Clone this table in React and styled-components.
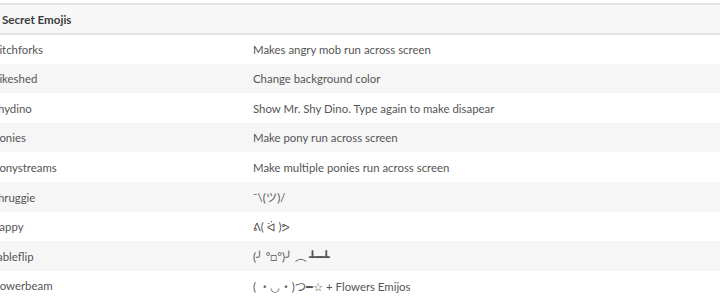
import styled, { createGlobalStyle } from "styled-components";

const GlobalStyle = createGlobalStyle`
  html, body {
    margin: 0;
    padding: 0;
    background: #fff;
    overflow: hidden;
  }
  body {
    font-family: Lato, "Open Sans", "DejaVu Sans", "Noto Sans CJK JP", sans-serif;
  }
`;

const emojis = [
  ["pitchforks", "Makes angry mob run across screen"],
  ["bikeshed", "Change background color"],
  ["shydino", "Show Mr. Shy Dino. Type again to make disapear"],
  ["ponies", "Make pony run across screen"],
  ["ponystreams", "Make multiple ponies run across screen"],
  ["shruggie", "¯\\(ツ)/"],
  ["happy", "ᕕ( ᐛ )ᕗ"],
  ["tableflip", "(╯ °□°)╯ ︵ ┻━┻"],
  ["flowerbeam", "( ・◡・)つ━☆ + Flowers Emijos"],
];

// rows are ~29.6px apart in the shot, so spread the rounding
const ROW = 29.6;
const rowHeight = (i) => Math.round((i + 1) * ROW) - Math.round(i * ROW);

function App() {
  return (
    <>
      <GlobalStyle />
      <Page>
        <Table>
          <colgroup>
            <col style={{ width: "260px" }} />
            <col />
          </colgroup>
          <thead>
            <tr>
              <HeadCell colSpan={2}>Secret Emojis</HeadCell>
            </tr>
          </thead>
          <tbody>
            {emojis.map(([name, desc], i) => (
              <Row key={name} $striped={i % 2 === 1} $h={rowHeight(i)}>
                <Cell>{name}</Cell>
                <Cell>{desc}</Cell>
              </Row>
            ))}
          </tbody>
        </Table>
      </Page>
    </>
  );
}

export default App;

const Page = styled.div`
  padding-top: 3px;
  width: 720px;
  overflow: hidden;
`;

const Table = styled.table`
  width: calc(100% + 15px);
  margin-left: -15px;
  border-collapse: collapse;
  table-layout: fixed;
  font-size: 11.4px;
  color: #555;
`;

const HeadCell = styled.th`
  text-align: left;
  height: 27px;
  padding: 1px 8px 0 17px;
  background: #f7f7f7;
  border-top: 2px solid #e3e3e3;
  border-bottom: 2px solid #e3e3e3;
  font-weight: 700;
  font-size: 11.6px;
  color: #3c3c3c;
  box-sizing: content-box;
`;

const Row = styled.tr`
  height: ${(p) => p.$h}px;
  background: ${(p) => (p.$striped ? "#f6f6f6" : "#fff")};
`;

const Cell = styled.td`
  padding: 0 8px;
  white-space: nowrap;
  overflow: hidden;
`;
